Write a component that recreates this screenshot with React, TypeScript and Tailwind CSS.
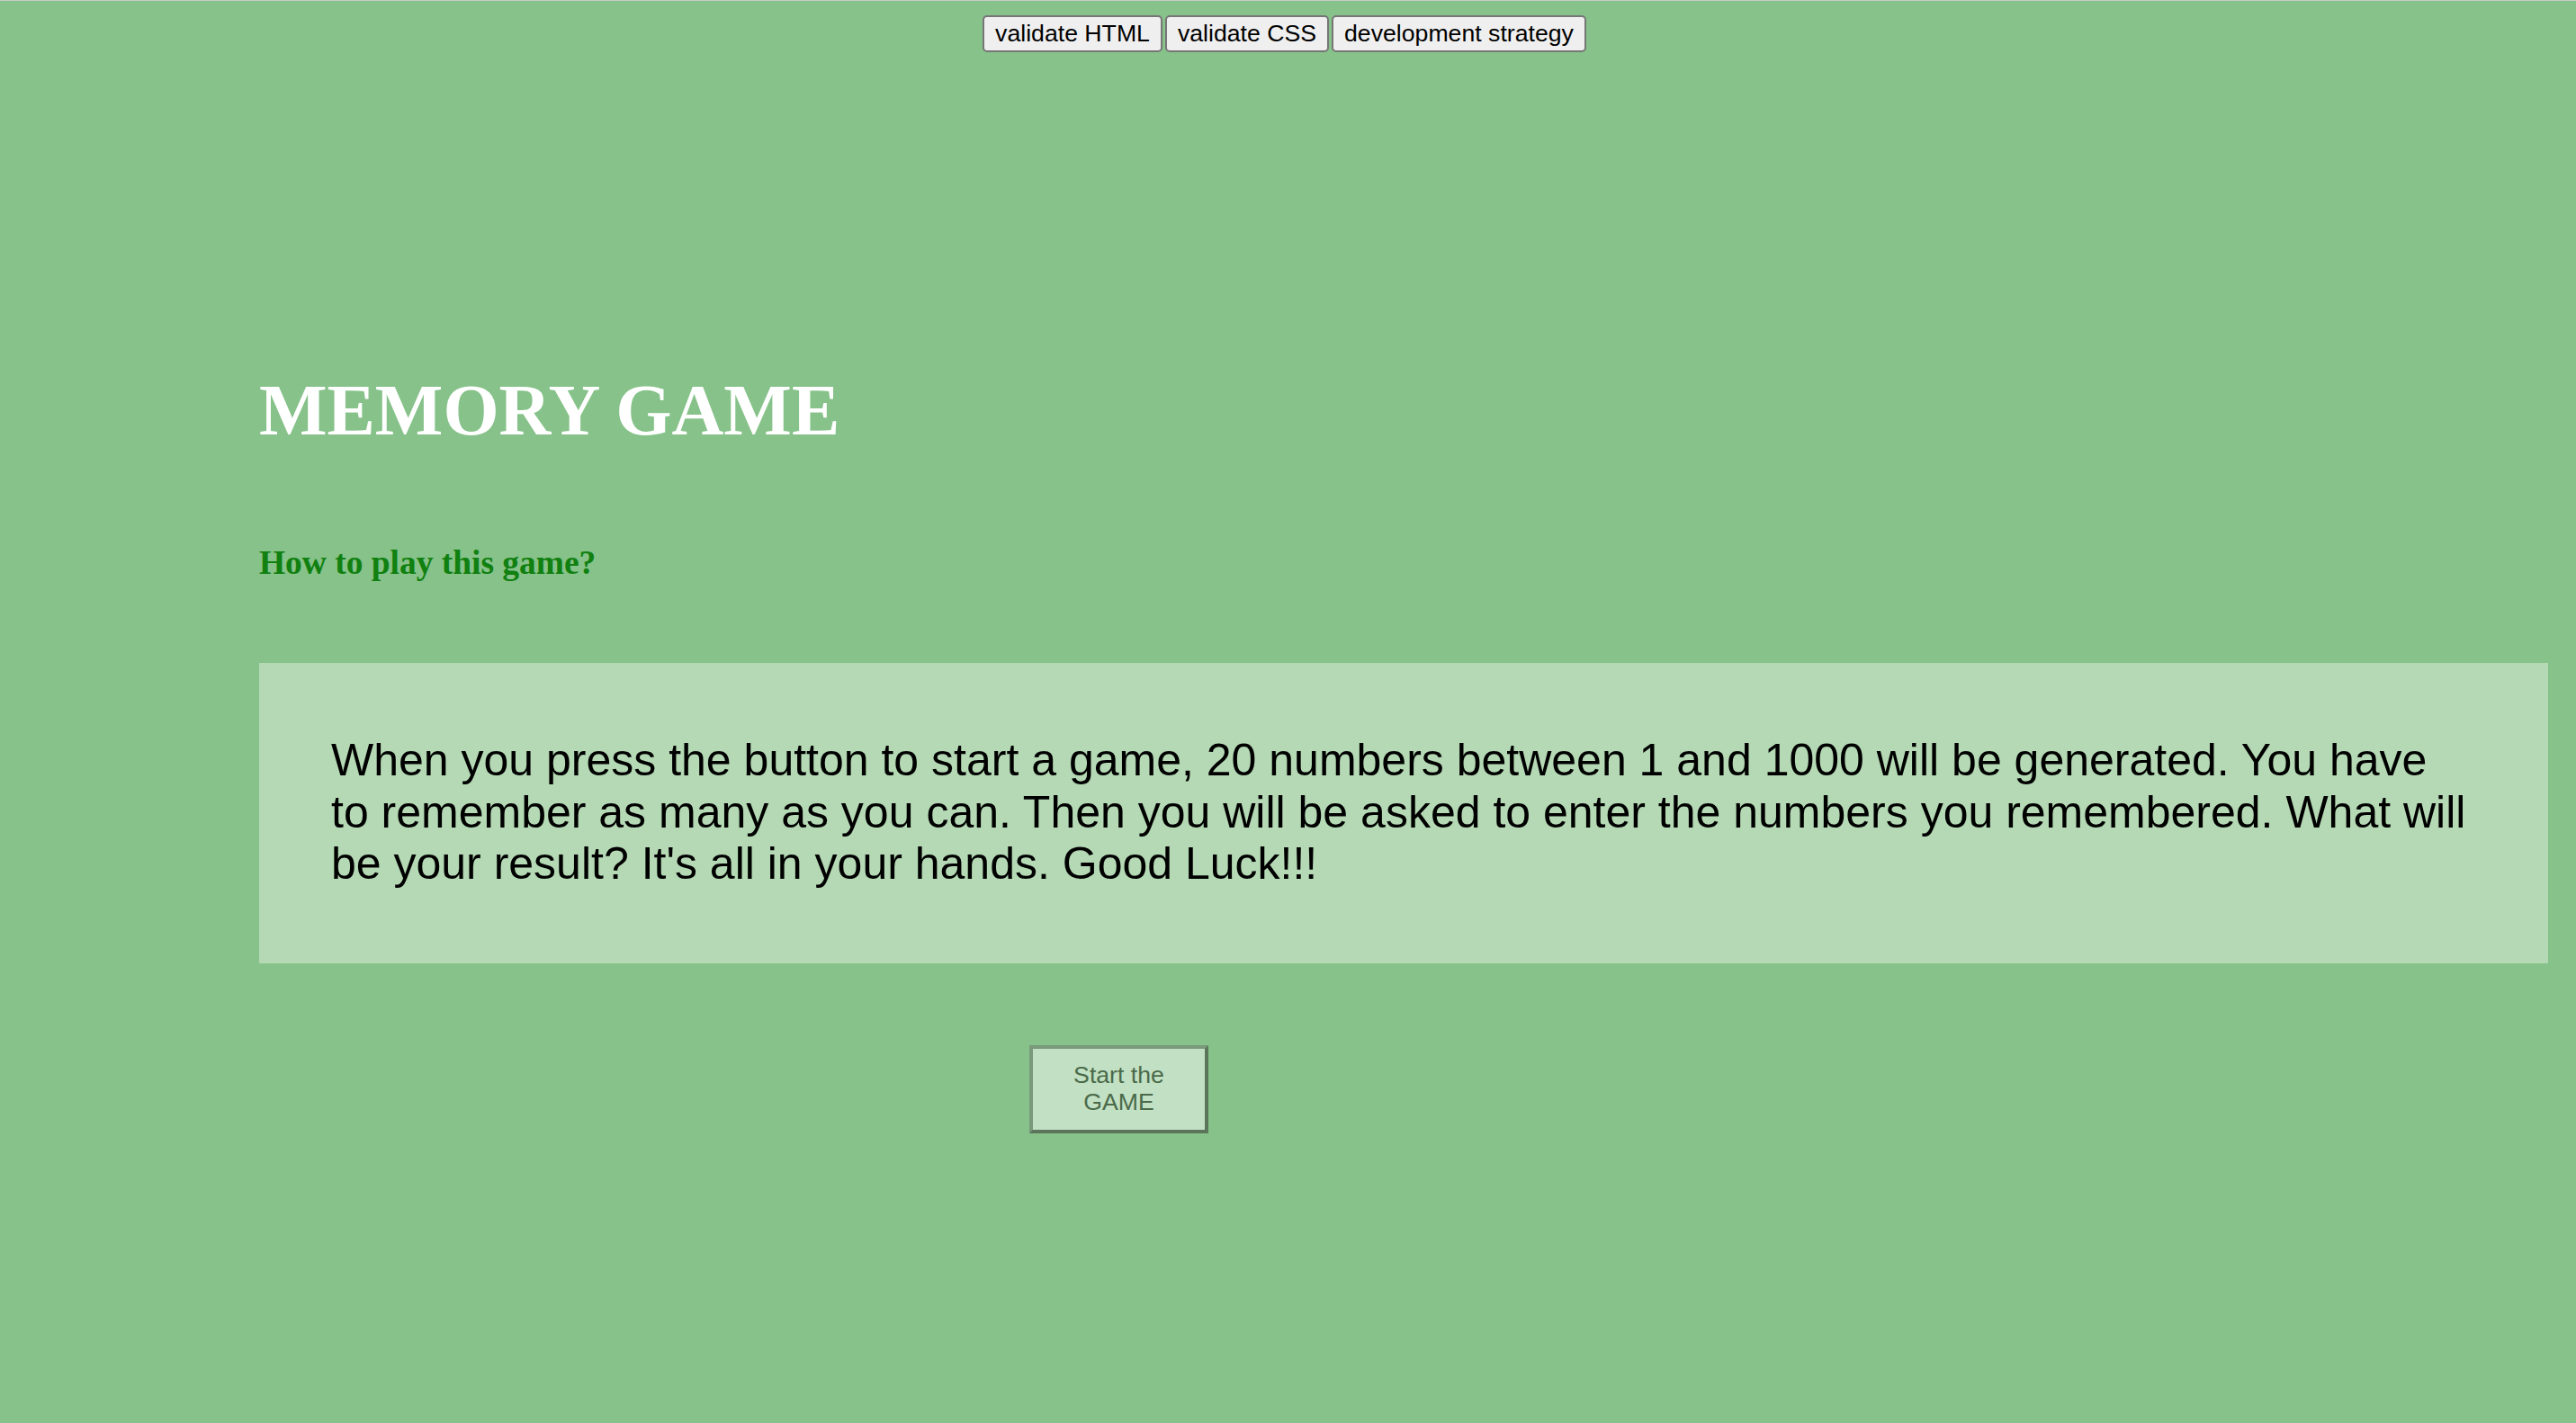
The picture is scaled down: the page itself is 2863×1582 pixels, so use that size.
const navButtons = ["validate HTML", "validate CSS", "development strategy"];

export default function App() {
  return (
    <div className="min-h-screen w-full bg-[#86c289] border-t border-[#c9cdc9] pb-[200px] font-['Liberation_Sans',Arial,sans-serif]">
      {/* top tool buttons */}
      <div className="flex justify-center gap-[3px] pt-[16px] pr-[8px]">
        {navButtons.map((label) => (
          <button
            key={label}
            className="h-[41px] px-[12px] bg-[#efefef] border-2 border-[#767676] rounded-[5px] text-[26.67px] leading-none text-black"
          >
            {label}
          </button>
        ))}
      </div>

      <div className="ml-[288px] mr-[31px]">
        <h1 className="mt-[358px] text-[80px] leading-[80px] font-bold text-white font-['Liberation_Serif','Times_New_Roman',serif]">
          MEMORY GAME
        </h1>

        <h3 className="mt-[111px] text-[37.44px] leading-[37.44px] font-bold text-[#108010] font-['Liberation_Serif','Times_New_Roman',serif]">
          How to play this game?
        </h3>

        <div className="mt-[93px] bg-[#b4d9b4] pt-[80px] pb-[81px] px-[80px]">
          <p className="text-[50px] leading-[57.5px] text-black">
            When you press the button to start a game, 20 numbers between 1 and 1000 will be generated. You have to
            remember as many as you can. Then you will be asked to enter the numbers you remembered. What will be your
            result? It's all in your hands. Good Luck!!!
          </p>
        </div>
      </div>

      <button className="block mt-[91px] ml-[1144px] w-[199px] h-[98px] px-[14px] bg-[#c2e0c3] border-4 border-t-[#7a997a] border-l-[#7a997a] border-b-[#5b755b] border-r-[#5b755b] text-[26.67px] leading-[29.5px] text-[#4a6a4a] text-center">
        Start the GAME
      </button>
    </div>
  );
}
